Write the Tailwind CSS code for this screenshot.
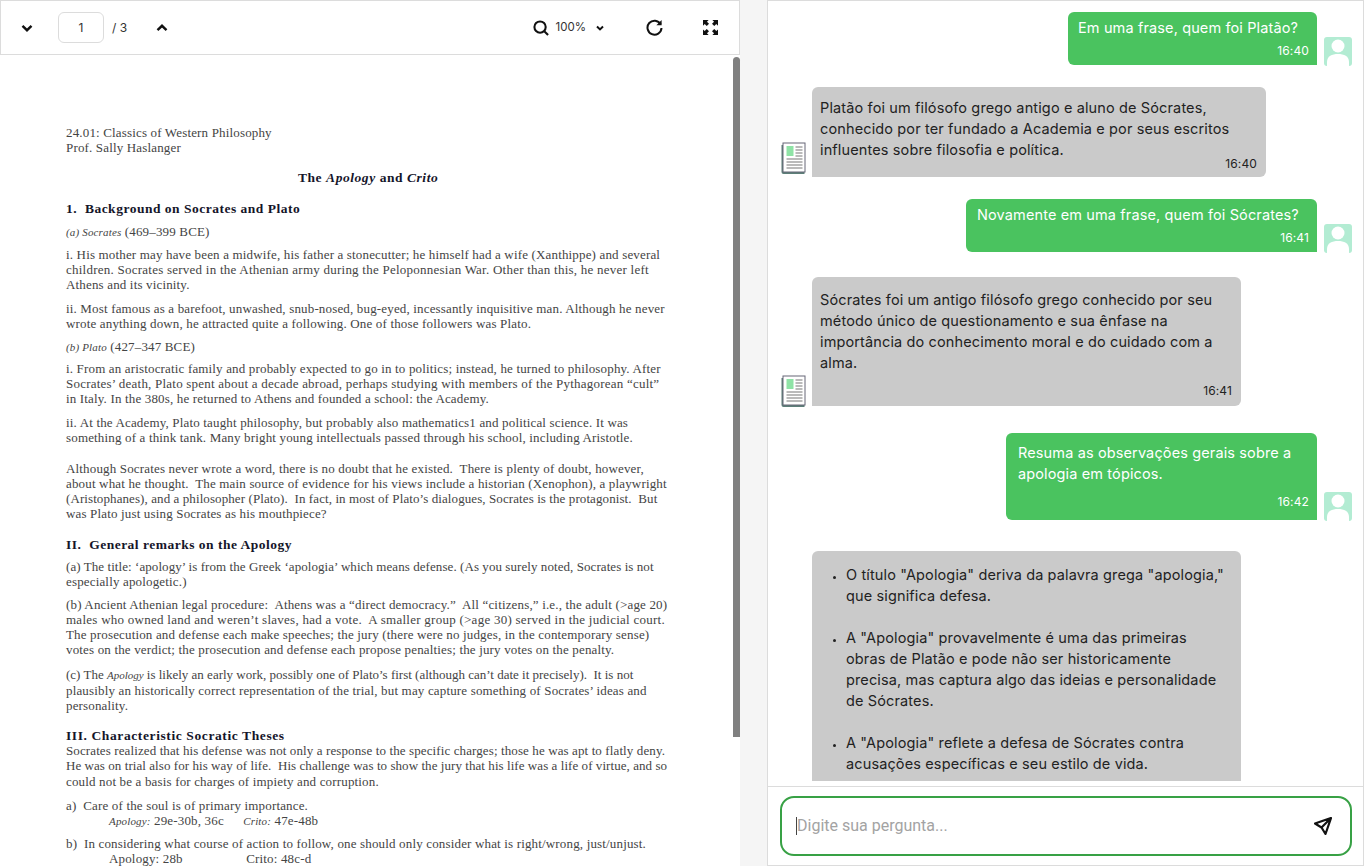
<!DOCTYPE html>
<html lang="pt-BR">
<head>
    <meta charset="UTF-8">
    <meta name="viewport" content="width=device-width, initial-scale=1.0">
    <title>Chat PDF</title>
    <script src="https://cdn.jsdelivr.net/npm/@tailwindcss/browser@4"></script>
</head>
<body class="bg-[#f5f5f5] h-[866px] w-[1364px] overflow-hidden flex font-['Inter',sans-serif]">
    <!-- pdf viewer -->
    <div class="w-[740px] h-full flex flex-col bg-white relative">
        <div class="h-[55px] shrink-0 border border-[#dcdcdc] flex items-center bg-white">
            <svg class="ml-[20px] w-[12px] h-[12px]" viewBox="0 0 12 12" fill="none" stroke="#111" stroke-width="2.4"><path d="M1.5 3.8 6 8.2l4.5-4.4"/></svg>
            <div class="ml-[25px] w-[46px] h-[31px] border border-[#dcdcdc] rounded-md flex items-center justify-center text-xs text-[#333]">1</div>
            <span class="ml-[8px] text-xs text-[#333]">/ 3</span>
            <svg class="ml-[29px] w-[12px] h-[12px]" viewBox="0 0 12 12" fill="none" stroke="#111" stroke-width="2.4"><path d="M1.5 8.2 6 3.8l4.5 4.4"/></svg>
            <svg class="ml-auto w-[16px] h-[16px]" viewBox="0 0 17 17" fill="none" stroke="#111" stroke-width="2.200"><circle cx="7.500" cy="7.500" r="6"/><path d="m12 12 4 4"/></svg>
            <span class="ml-[7px] text-[11.5px] text-[#333]">100%</span>
            <svg class="ml-[10px] w-[8px] h-[8px]" viewBox="0 0 12 12" fill="none" stroke="#111" stroke-width="3"><path d="M1.5 3.800 6 8.200l4.500-4.400"/></svg>
            <svg class="ml-[42px] w-[17px] h-[17px]" viewBox="0 0 17 17" fill="none" stroke="#111" stroke-width="2"><path d="M14.600 5.200A7 7 0 1 0 15.500 9"/><path d="M15.600 1v5.200h-5.200" fill="#111" stroke="none"/></svg>
            <svg class="ml-[40px] mr-[21px] w-[15px] h-[15px]" viewBox="0 0 16 16" fill="#111"><path d="M0 0h6L4.200 1.800 6.400 4 4 6.400 1.800 4.200 0 6zM16 0v6l-1.800-1.800L12 6.400 9.600 4l2.200-2.200L10 0zM0 16v-6l1.800 1.800L4 9.600 6.400 12l-2.200 2.200L6 16zM16 16h-6l1.800-1.800L9.600 12 12 9.600l2.200 2.200L16 10z"/></svg>
        </div>
        <div class="flex-1 overflow-hidden pl-[66px] pt-[70px] font-['Liberation_Serif',serif] text-[13px] leading-[15px] text-[#444] whitespace-nowrap tracking-[0.16px]">
            <p>24.01: Classics of Western Philosophy</p>
            <p>Prof. Sally Haslanger</p>
            <p class="mt-[15px] ml-[232px] font-bold text-[13.5px] tracking-[0.55px] text-[#15152a]">The <i>Apology</i> and <i>Crito</i></p>
            <p class="mt-[16px] font-bold text-[13.5px] tracking-[0.5px] text-[#15152a]">1.&nbsp; Background on Socrates and Plato</p>
            <p class="mt-[8px]"><i class="text-[11px]">(a) Socrates</i> (469–399 BCE)</p>
            <p class="mt-[7px]">i. His mother may have been a midwife, his father a stonecutter; he himself had a wife (Xanthippe) and several</p>
            <p class="tracking-[0.24px]">children. Socrates served in the Athenian army during the Peloponnesian War. Other than this, he never left</p>
            <p>Athens and its vicinity.</p>
            <p class="mt-[9px]">ii. Most famous as a barefoot, unwashed, snub-nosed, bug-eyed, incessantly inquisitive man. Although he never</p>
            <p>wrote anything down, he attracted quite a following. One of those followers was Plato.</p>
            <p class="mt-[8px]"><i class="text-[11px]">(b) Plato</i> (427–347 BCE)</p>
            <p class="mt-[6px]">i. From an aristocratic family and probably expected to go in to politics; instead, he turned to philosophy. After</p>
            <p class="tracking-[0.22px]">Socrates’ death, Plato spent about a decade abroad, perhaps studying with members of the Pythagorean “cult”</p>
            <p>in Italy. In the 380s, he returned to Athens and founded a school: the Academy.</p>
            <p class="mt-[9px]">ii. At the Academy, Plato taught philosophy, but probably also mathematics1 and political science. It was</p>
            <p>something of a think tank. Many bright young intellectuals passed through his school, including Aristotle.</p>
            <p class="mt-[16px]">Although Socrates never wrote a word, there is no doubt that he existed.&nbsp; There is plenty of doubt, however,</p>
            <p>about what he thought.&nbsp; The main source of evidence for his views include a historian (Xenophon), a playwright</p>
            <p class="tracking-[0.09px]">(Aristophanes), and a philosopher (Plato).&nbsp; In fact, in most of Plato’s dialogues, Socrates is the protagonist.&nbsp; But</p>
            <p>was Plato just using Socrates as his mouthpiece?</p>
            <p class="mt-[16px] font-bold text-[13.5px] tracking-[0.5px] text-[#15152a]">II.&nbsp; General remarks on the Apology</p>
            <p class="mt-[7px] tracking-[0.07px]">(a) The title: ‘apology’ is from the Greek ‘apologia’ which means defense. (As you surely noted, Socrates is not</p>
            <p>especially apologetic.)</p>
            <p class="mt-[8px]">(b) Ancient Athenian legal procedure:&nbsp; Athens was a “direct democracy.”&nbsp; All “citizens,” i.e., the adult (&gt;age 20)</p>
            <p class="tracking-[0.26px]">males who owned land and weren’t slaves, had a vote.&nbsp; A smaller group (&gt;age 30) served in the judicial court.</p>
            <p>The prosecution and defense each make speeches; the jury (there were no judges, in the contemporary sense)</p>
            <p>votes on the verdict; the prosecution and defense each propose penalties; the jury votes on the penalty.</p>
            <p class="mt-[10px] tracking-[0px]">(c) The <i class="text-[11px]">Apology</i> is likely an early work, possibly one of Plato’s first (although can’t date it precisely).&nbsp; It is not</p>
            <p>plausibly an historically correct representation of the trial, but may capture something of Socrates’ ideas and</p>
            <p>personality.</p>
            <p class="mt-[15px] font-bold text-[13.5px] tracking-[0.6px] text-[#15152a]">III. Characteristic Socratic Theses</p>
            <p class="tracking-[0.11px]">Socrates realized that his defense was not only a response to the specific charges; those he was apt to flatly deny.</p>
            <p class="tracking-[0.06px]">He was on trial also for his way of life.&nbsp; His challenge was to show the jury that his life was a life of virtue, and so</p>
            <p class="mt-[1px]">could not be a basis for charges of impiety and corruption.</p>
            <p class="mt-[9px]">a)&nbsp; Care of the soul is of primary importance.</p>
            <p class="ml-[43px]"><i class="text-[11px]">Apology:</i> 29e-30b, 36c <span class="ml-[16px]"><i class="text-[11px]">Crito:</i> 47e-48b</span></p>
            <p class="mt-[7px]">b)&nbsp; In considering what course of action to follow, one should only consider what is right/wrong, just/unjust.</p>
            <p class="ml-[43px]">Apology: 28b <span class="ml-[60px]">Crito: 48c-d</span></p>
        </div>
        <div class="absolute left-[733px] top-[57px] w-[7px] h-[680px] rounded-t-full bg-[#808080]"></div>
    </div>

    <!-- chat -->
    <div class="ml-[27px] w-[597px] h-full flex flex-col bg-white border border-[#dcdcdc]">
        <div class="h-[780px] shrink-0 overflow-hidden pt-[11px] pl-[13px] pr-[11px] flex flex-col text-[14.5px] tracking-[0.13px] leading-[21px]">
            <div class="flex justify-end items-end gap-[7px]">
                <div class="w-[249px] h-[53px] bg-[#4ac35f] text-white rounded-t-md rounded-bl-md px-[10px] pt-[5px]">
                    <p>Em uma frase, quem foi Platão?</p>
                    <p class="text-xs text-right leading-[16px] mt-[5px] -mr-[2px]">16:40</p>
                </div>
                <svg class="w-[28px] h-[29px] -mb-px" viewBox="0 0 28 29"><rect width="28" height="29" rx="3" fill="#b3ecd3"/><circle cx="14" cy="9" r="6.500" fill="#fff"/><path d="M3 29v-4c0-6 5-8 11-8s11 2 11 8v4z" fill="#fff"/></svg>
            </div>
            <div class="flex items-end gap-[6px] mt-[22px]">
                <svg class="-ml-px w-[26px] h-[33px] mb-[2px]" viewBox="0 0 25 33"><path d="M1 3h23v29H3a2 2 0 0 1-2-2z" fill="#5c7f78"/><rect x="2.500" y="1" width="22" height="29" fill="#fff" stroke="#667" stroke-width="1"/><rect x="6" y="4" width="7" height="10" fill="#8fe3a6"/><path d="M15 5h7M15 8h7M15 11h7M15 14h7M6 17h16M6 20h16M6 23h16M6 26h16" stroke="#777" stroke-width="1.200"/></svg>
                <div class="w-[454px] h-[90px] bg-[#cacaca] text-[#222] rounded-t-md rounded-br-md pl-[8px] pr-[9px] pt-[10px]">
                    <p>Platão foi um filósofo grego antigo e aluno de Sócrates, conhecido por ter fundado a Academia e por seus escritos influentes sobre filosofia e política.</p>
                    <p class="text-xs text-right leading-[14px] -mt-[3px]">16:40</p>
                </div>
            </div>
            <div class="flex justify-end items-end gap-[7px] mt-[22px]">
                <div class="w-[351px] h-[53px] bg-[#4ac35f] text-white rounded-t-md rounded-bl-md px-[11px] pt-[5px]">
                    <p>Novamente em uma frase, quem foi Sócrates?</p>
                    <p class="text-xs text-right leading-[16px] mt-[5px] -mr-[3px]">16:41</p>
                </div>
                <svg class="w-[28px] h-[29px] -mb-px" viewBox="0 0 28 29"><rect width="28" height="29" rx="3" fill="#b3ecd3"/><circle cx="14" cy="9" r="6.500" fill="#fff"/><path d="M3 29v-4c0-6 5-8 11-8s11 2 11 8v4z" fill="#fff"/></svg>
            </div>
            <div class="flex items-end gap-[6px] mt-[25px]">
                <svg class="-ml-px w-[26px] h-[33px] mb-[-2px]" viewBox="0 0 25 33"><path d="M1 3h23v29H3a2 2 0 0 1-2-2z" fill="#5c7f78"/><rect x="2.500" y="1" width="22" height="29" fill="#fff" stroke="#667" stroke-width="1"/><rect x="6" y="4" width="7" height="10" fill="#8fe3a6"/><path d="M15 5h7M15 8h7M15 11h7M15 14h7M6 17h16M6 20h16M6 23h16M6 26h16" stroke="#777" stroke-width="1.200"/></svg>
                <div class="w-[429px] h-[129px] bg-[#cacaca] text-[#222] rounded-t-md rounded-br-md pl-[8px] pr-[9px] pt-[12px]">
                    <p>Sócrates foi um antigo filósofo grego conhecido por seu método único de questionamento e sua ênfase na importância do conhecimento moral e do cuidado com a alma.</p>
                    <p class="text-xs text-right leading-[16px] mt-[10px]">16:41</p>
                </div>
            </div>
            <div class="flex justify-end items-end gap-[7px] mt-[27px]">
                <div class="w-[311px] h-[87px] bg-[#4ac35f] text-white rounded-t-md rounded-bl-md px-[12px] pt-[9px]">
                    <p>Resuma as observações gerais sobre a apologia em tópicos.</p>
                    <p class="text-xs text-right leading-[16px] mt-[10px] -mr-[4px]">16:42</p>
                </div>
                <svg class="w-[28px] h-[29px] -mb-px" viewBox="0 0 28 29"><rect width="28" height="29" rx="3" fill="#b3ecd3"/><circle cx="14" cy="9" r="6.500" fill="#fff"/><path d="M3 29v-4c0-6 5-8 11-8s11 2 11 8v4z" fill="#fff"/></svg>
            </div>
            <div class="mt-[31px] ml-[31px] w-[429px] h-[260px] shrink-0 bg-[#cacaca] text-[#222] rounded-t-md pl-[34px] pr-[14px] pt-[13px]">
                <ul class="list-disc marker:text-[10px]">
                    <li>O título "Apologia" deriva da palavra grega "apologia," que significa defesa.</li>
                    <li class="mt-[21px]">A "Apologia" provavelmente é uma das primeiras obras de Platão e pode não ser historicamente precisa, mas captura algo das ideias e personalidade de Sócrates.</li>
                    <li class="mt-[21px]">A "Apologia" reflete a defesa de Sócrates contra acusações específicas e seu estilo de vida.</li>
                </ul>
            </div>
        </div>
        <div class="flex-1 border-t border-[#dcdcdc] mt-[5px] pl-[12px] pr-[11px] pt-[9px]">
            <div class="h-[60px] border-2 border-[#38a145] rounded-[14px] flex items-center pl-[14px] pr-[18px] font-['Roboto',sans-serif] text-[16px] text-[#a3a3a3]">
                <span class="w-px h-[18px] bg-[#444]"></span>
                <span>Digite sua pergunta...</span>
                <svg class="ml-auto w-[18px] h-[18px]" viewBox="0 0 18 18" fill="none" stroke="#111" stroke-width="2.200" stroke-linejoin="round"><path d="M17 1 1 6.500 7.500 10.500 11.500 17zM17 1 7.500 10.500"/></svg>
            </div>
        </div>
    </div>
</body>
</html>
